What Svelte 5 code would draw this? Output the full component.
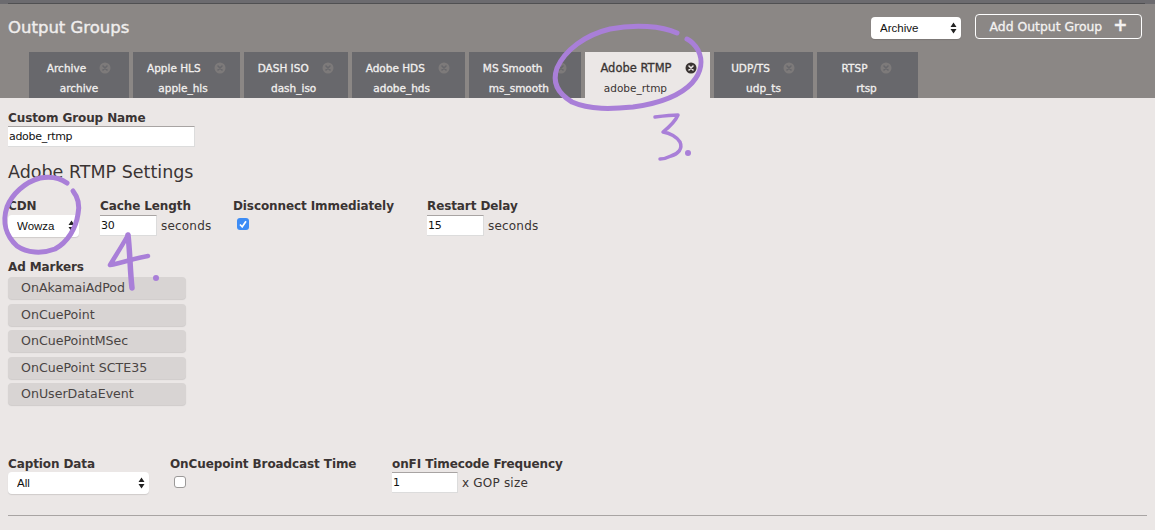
<script lang="ts">
	const tabs = [
		{ name: 'Archive', slug: 'archive' },
		{ name: 'Apple HLS', slug: 'apple_hls' },
		{ name: 'DASH ISO', slug: 'dash_iso' },
		{ name: 'Adobe HDS', slug: 'adobe_hds' },
		{ name: 'MS Smooth', slug: 'ms_smooth' },
		{ name: 'Adobe RTMP', slug: 'adobe_rtmp', active: true },
		{ name: 'UDP/TS', slug: 'udp_ts' },
		{ name: 'RTSP', slug: 'rtsp' }
	];
	const markers = ['OnAkamaiAdPod', 'OnCuePoint', 'OnCuePointMSec', 'OnCuePoint SCTE35', 'OnUserDataEvent'];
</script>

{#snippet arrows()}
	<svg class="arrows" width="7" height="12" viewBox="0 0 7 12">
		<path d="M3.5 0.5 L6.5 5 H0.5 Z M3.5 11.5 L6.5 7 H0.5 Z" fill="#222" />
	</svg>
{/snippet}

<div class="page">
	<header class="header">
		<div class="topline"><div class="rule"></div></div>
		<div class="titlebar">
			<h1>Output Groups</h1>
			<div class="actions">
				<div class="select-wrap sel-archive">
					<select><option>Archive</option></select>
					{@render arrows()}
				</div>
				<button class="add">Add Output Group <span class="plus">+</span></button>
			</div>
		</div>
		<nav class="tabs">
			{#each tabs as tab}
				<div class="tab" class:active={tab.active}>
					<div class="tab-top">
						<span class="tab-name">{tab.name}</span>
						<svg class="close" width="12" height="12" viewBox="0 0 12 12">
							<circle cx="6" cy="6" r="5.5" fill="currentColor" />
							<path d="M4 4 L8 8 M8 4 L4 8" class="x" stroke-width="1.6" stroke-linecap="round" />
						</svg>
					</div>
					<div class="tab-slug">{tab.slug}</div>
				</div>
			{/each}
		</nav>
	</header>

	<main class="content">
		<div class="field">
			<label for="group-name">Custom Group Name</label>
			<input id="group-name" class="in-name" value="adobe_rtmp" />
		</div>

		<h2>Adobe RTMP Settings</h2>

		<div class="row row-cdn">
			<div class="field f-cdn">
				<label for="cdn">CDN</label>
				<div class="select-wrap sel-cdn">
					<select id="cdn"><option>Wowza</option></select>
					{@render arrows()}
				</div>
			</div>
			<div class="field f-cache">
				<label for="cache">Cache Length</label>
				<div class="inline"><input id="cache" class="in-num" value="30" /><span>seconds</span></div>
			</div>
			<div class="field f-disc">
				<span class="lbl">Disconnect Immediately</span>
				<span class="check on">
					<svg width="8" height="8" viewBox="0 0 8 8"><path d="M1 4.5 L3.2 6.8 L7 1.2" fill="none" stroke="#fff" stroke-width="1.7" /></svg>
				</span>
			</div>
			<div class="field">
				<label for="delay">Restart Delay</label>
				<div class="inline"><input id="delay" class="in-num" value="15" /><span>seconds</span></div>
			</div>
		</div>

		<div class="field f-markers">
			<span class="lbl">Ad Markers</span>
			<div class="markers">
				{#each markers as m}
					<div class="marker">{m}</div>
				{/each}
			</div>
		</div>

		<div class="row row-caption">
			<div class="field f-caption">
				<label for="caption">Caption Data</label>
				<div class="select-wrap sel-caption">
					<select id="caption"><option>All</option></select>
					{@render arrows()}
				</div>
			</div>
			<div class="field f-broadcast">
				<span class="lbl">OnCuepoint Broadcast Time</span>
				<span class="check"></span>
			</div>
			<div class="field">
				<label for="onfi">onFI Timecode Frequency</label>
				<div class="inline"><input id="onfi" class="in-gop" value="1" /><span>x GOP size</span></div>
			</div>
		</div>

		<hr />
	</main>

	<!-- hand drawn annotations on top of the screenshot -->
	<svg class="notes" width="1155" height="530" viewBox="0 0 1155 530">
		<g fill="none" stroke="#a97fd8" stroke-width="5" stroke-linecap="round" stroke-linejoin="round">
			<path d="M677 33 C662 26 635 24 610 29 C585 35 565 50 557 68 C552 82 557 93 572 102 C590 110 612 109 633 107 C655 104 678 98 692 83 C702 72 703 60 698 50 C695 45 691 41 687 39" />
			<path d="M655 117 C663 116 671 115 678 115 C675 122 668 128 663 132 C670 133 677 137 680 142 C683 149 678 154 671 156 C667 158 663 159 660 159" stroke-width="3.5" />
			<path d="M67 183 C60 178 50 176 40 178 C25 182 12 194 7 207 C2 222 6 236 17 246 C27 253 42 254 55 249 C68 242 76 228 78 214 C80 204 77 196 73 191" />
			<path d="M128 235 C122 246 116 255 110 265 C122 263 135 258 148 256" stroke-width="4.5" />
			<path d="M128 235 C130 252 130 270 132 288" stroke-width="5.5" />
		</g>
		<circle cx="688" cy="153" r="3" fill="#a97fd8" />
		<circle cx="156" cy="278" r="3" fill="#a97fd8" />
	</svg>
</div>

<style>
	:global(body) {
		background: #fff;
	}

	.page {
		position: relative;
		width: 1155px;
		height: 530px;
		overflow: hidden;
		background: #ebe7e6;
		font-family: "DejaVu Sans", sans-serif;
		color: #3a3433;
	}

	/* Header */
	.header {
		height: 98px;
		background: #8b8785;
		display: flex;
		flex-direction: column;
	}

	.topline {
		height: 4px;
		padding: 3px 10px 0 8px;
		background: #6c6b6f;
		box-sizing: border-box;
	}

	.rule {
		height: 1px;
		background: #505052;
	}

	.titlebar {
		height: 48px;
		padding: 0 13px 0 8px;
		display: flex;
		justify-content: space-between;
		align-items: flex-start;
	}

	h1 {
		margin: 13px 0 0;
		font-size: 16.5px;
		line-height: 22px;
		font-weight: 400;
		color: #f0eeed;
		-webkit-text-stroke: 0.4px #f0eeed;
	}

	.actions {
		display: flex;
		gap: 14px;
		padding-top: 10px;
	}

	.add {
		width: 167px;
		height: 25px;
		padding: 0 0 2px;
		border: 1px solid #fff;
		border-radius: 4px;
		background: transparent;
		color: #f4f2f1;
		font-family: inherit;
		font-size: 12.4px;
		-webkit-text-stroke: 0.3px #f4f2f1;
	}

	.plus {
		margin-left: 7px;
		font-weight: 700;
		font-size: 17px;
		line-height: 1;
	}

	.tabs {
		display: flex;
		gap: 4px;
		padding-left: 29px;
		height: 46px;
	}

	.tab {
		min-width: 100px;
		box-sizing: border-box;
		padding: 0 14px;
		background: #68686c;
		color: #f2f0ef;
		font-size: 10.5px;
		-webkit-text-stroke: 0.3px #f2f0ef;
	}

	.tab:nth-child(4) {
		padding-right: 15px;
	}

	.tab:nth-child(7) {
		min-width: 99px;
	}

	.tab:nth-child(8) {
		min-width: 101px;
	}

	.tab-top {
		display: flex;
		align-items: center;
		justify-content: center;
		gap: 13px;
		height: 32px;
	}

	/* slug stays centred in the first 100px, whatever the tab width */
	.tab-slug {
		width: 100px;
		margin: -2px -100px 0 -14px;
		line-height: 12px;
		text-align: center;
	}

	.close {
		color: #7d7a7a;
	}

	.close .x {
		stroke: #68686c;
	}

	.tab.active {
		padding: 0 13px 0 15px;
		background: #ebe7e6;
		color: #3a3433;
		-webkit-text-stroke: 0;
	}

	.tab.active .tab-slug {
		margin-left: -15px;
	}

	.tab.active .tab-name {
		font-size: 11.5px;
		-webkit-text-stroke: 0.3px #3a3433;
	}

	.tab.active .close {
		color: #3a3433;
	}

	.tab.active .close .x {
		stroke: #ebe7e6;
	}

	/* Form */
	.content {
		padding: 13px 8px 0;
	}

	.field {
		display: flex;
		flex-direction: column;
		align-items: flex-start;
	}

	label,
	.lbl {
		font-size: 12px;
		line-height: 15px;
		font-weight: 700;
		letter-spacing: -0.1px;
		color: #3a3433;
	}

	input:not([type]) {
		box-sizing: border-box;
		height: 21px;
		border: 0;
		border-top: 1px solid #a8a4a3;
		border-right: 1px solid #dcdcdc;
		border-bottom: 1px solid #dcdcdc;
		border-radius: 0;
		padding: 0 1px;
		background: #fff;
		color: #111;
		font-family: inherit;
		font-size: 11px;
		letter-spacing: -0.3px;
		outline: none;
	}

	.in-name {
		width: 187px;
	}

	.in-num {
		width: 57px;
	}

	.in-gop {
		width: 66px;
	}

	h2 {
		margin: 14px 0 16px;
		font-size: 17.5px;
		line-height: 22px;
		font-weight: 400;
		color: #3a3433;
	}

	.row {
		display: flex;
	}

	.row-cdn .select-wrap,
	.row-cdn .inline {
		margin-top: 1px;
	}

	.inline {
		display: flex;
		align-items: center;
		gap: 4px;
		font-size: 12px;
		letter-spacing: 0.2px;
	}

	.f-cdn {
		width: 92px;
	}

	.f-cache {
		width: 133px;
	}

	.f-disc {
		width: 194px;
	}

	.check {
		box-sizing: border-box;
		display: flex;
		align-items: center;
		justify-content: center;
		width: 12px;
		height: 12px;
		margin: 4px 0 0 4px;
		border: 1px solid #9b9998;
		border-radius: 3px;
		background: #fff;
	}

	.check.on {
		border: 0;
		background: #3d8cf5;
	}

	.select-wrap {
		position: relative;
		height: 22px;
	}

	.select-wrap select {
		appearance: none;
		display: block;
		box-sizing: border-box;
		width: 100%;
		height: 100%;
		padding: 0 0 0 9px;
		border: 0;
		border-radius: 4px;
		background: #fff;
		color: #111;
		font-family: "Liberation Sans", sans-serif;
		font-size: 11.5px;
		box-shadow: 0 1px 1px rgba(0, 0, 0, 0.12);
	}

	.arrows {
		position: absolute;
		right: 4px;
		top: 5px;
	}

	.sel-archive {
		width: 90px;
		margin-top: 3px;
	}

	.sel-cdn {
		width: 71px;
	}

	.sel-caption {
		width: 141px;
	}

	.f-markers {
		margin-top: 23px;
	}

	.markers {
		display: flex;
		flex-direction: column;
		gap: 4.5px;
		margin-top: 2px;
	}

	.marker {
		box-sizing: border-box;
		width: 178px;
		height: 22px;
		padding-left: 13px;
		border-radius: 4px;
		background: #d8d4d3;
		box-shadow: 0 1px 1px rgba(0, 0, 0, 0.12);
		font-size: 12.6px;
		line-height: 22px;
		color: #4a4443;
	}

	.row-caption {
		margin-top: 52px;
	}

	.f-caption {
		width: 162px;
	}

	.f-broadcast {
		width: 222px;
	}

	hr {
		margin: 21px 0 0;
		border: 0;
		border-top: 1px solid #a8a4a3;
	}

	/* Annotations */
	.notes {
		position: absolute;
		top: 0;
		left: 0;
		pointer-events: none;
	}
</style>
